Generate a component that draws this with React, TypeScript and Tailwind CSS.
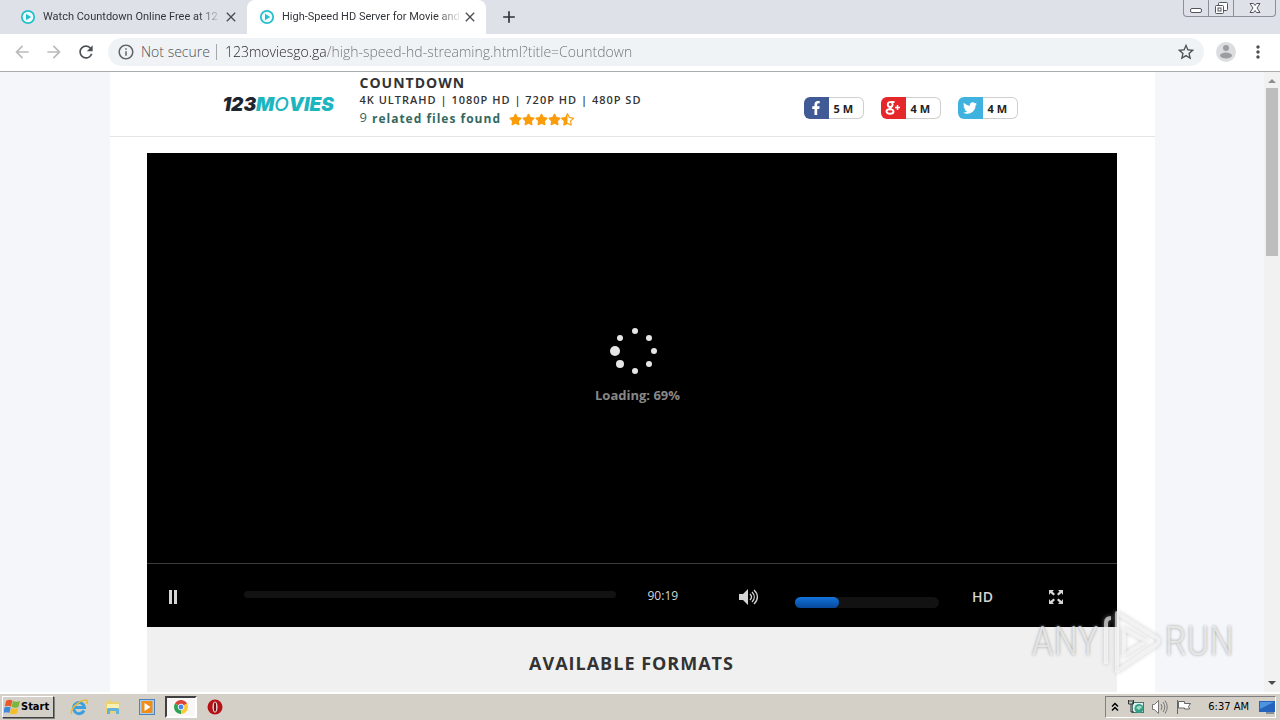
import { ReactNode } from 'react';
import { FaFacebookF, FaStar, FaStarHalfAlt, FaTwitter } from 'react-icons/fa';
import { MdArrowBack, MdArrowForward, MdClose, MdInfoOutline, MdMoreVert, MdRefresh, MdStarBorder, MdAdd } from 'react-icons/md';

const tabs = [
  { title: 'Watch Countdown Online Free at 12', active: false },
  { title: 'High-Speed HD Server for Movie and', active: true },
];

function PlayFavicon() {
  return (
    <svg className="size-4 shrink-0" viewBox="0 0 16 16">
      <circle cx="8" cy="8" r="6.2" fill="#effcfd" stroke="#27bfcb" strokeWidth="1.8" />
      <path d="M6 4.8v6.4L11.2 8z" fill="#27bfcb" />
    </svg>
  );
}

function TabStrip() {
  return (
    <div className="flex h-[34px] items-stretch bg-[#dee1e8]">
      <div role="tablist" className="flex pl-2">
        {tabs.map((tab) => (
          <div
            key={tab.title}
            className={`flex w-[239px] items-center rounded-t-lg pl-3 pr-2 ${tab.active ? 'bg-white' : ''}`}
          >
            <PlayFavicon />
            <button
              role="tab"
              aria-selected={tab.active}
              className="ml-[7px] flex-1 whitespace-nowrap text-left font-['Roboto',sans-serif] text-[11px] text-[#33363a] [mask-image:linear-gradient(90deg,#000_86%,transparent)]"
            >
              {tab.title}
            </button>
            <button aria-label="Close tab">
              <MdClose className="size-4 text-[#4a4d51]" />
            </button>
          </div>
        ))}
      </div>
      <button aria-label="New tab" className="ml-[13px]">
        <MdAdd className="size-5 text-[#2f3338]" />
      </button>
      <div className="ml-auto mr-1 flex h-[17px] rounded-b border border-t-0 border-[#8b8f99] text-[#50545e]">
        <button aria-label="Minimize" className="flex w-[25px] items-center justify-center border-r border-[#8b8f99]">
          <svg className="size-4" viewBox="0 0 16 16" fill="#fff" stroke="currentColor">
            <rect x="2.5" y="8.5" width="11" height="4" rx="1.5" />
          </svg>
        </button>
        <button aria-label="Restore" className="flex w-[25px] items-center justify-center border-r border-[#8b8f99]">
          <svg className="size-4" viewBox="0 0 16 16" fill="#fff" stroke="currentColor">
            <rect x="5.5" y="2.5" width="9" height="8" rx="1" />
            <rect x="2.5" y="5.5" width="8" height="8" rx="1" />
            <rect x="5" y="8" width="3" height="3" />
          </svg>
        </button>
        <button aria-label="Close window" className="flex w-[41px] items-center justify-center">
          <svg className="size-4" viewBox="0 0 16 16" fill="#fff" stroke="currentColor">
            <path d="M3 3.5h3.5L8 5.5l1.5-2H13L10 8l3 4.5H9.5L8 10.5l-1.5 2H3L6 8z" />
          </svg>
        </button>
      </div>
    </div>
  );
}

function AddressBar() {
  return (
    <div className="flex h-[38px] items-center border-b border-[#aaadad] bg-white pb-[2px] pl-3 pr-3">
      <button aria-label="Back" className="mr-3">
        <MdArrowBack className="size-5 text-[#b9bbbd]" />
      </button>
      <button aria-label="Forward" className="mr-3">
        <MdArrowForward className="size-5 text-[#b9bbbd]" />
      </button>
      <button aria-label="Reload" className="mr-3">
        <MdRefresh className="size-5 text-[#4d5155]" />
      </button>
      <div className="flex h-7 flex-1 items-center rounded-full bg-[#f0f3f6] pl-[9px] pr-2 font-['Open_Sans','Noto_Sans',sans-serif] text-[14px]">
        <MdInfoOutline className="mr-[6px] size-[18px] text-[#5f6368]" />
        <span className="mr-[6px] whitespace-nowrap font-light text-[#4d5155]">Not secure</span>
        <span className="mr-2 h-4 w-px bg-[#a4a7ab]" />
        <input
          aria-label="Address"
          defaultValue="123moviesgo.ga/high-speed-hd-streaming.html?title=Countdown"
          className="min-w-0 flex-1 bg-[linear-gradient(90deg,#202124_102px,#6c7075_102px)] bg-clip-text font-light text-transparent outline-none"
        />
        <button aria-label="Bookmark this page">
          <MdStarBorder className="size-5 text-[#4d5155]" />
        </button>
      </div>
      <button aria-label="Profile" className="ml-3">
        <svg className="size-5" viewBox="0 0 20 20">
          <circle cx="10" cy="10" r="10" fill="#dcdddf" />
          <circle cx="10" cy="6" r="3" fill="#9b9da0" />
          <ellipse cx="10" cy="13.5" rx="6" ry="3" fill="#9b9da0" />
        </svg>
      </button>
      <button aria-label="Menu" className="ml-3">
        <MdMoreVert className="size-5 text-[#4d5155]" />
      </button>
    </div>
  );
}

function ShareButton({ label, count, color, children }: {
  label: string;
  count: string;
  color: string;
  children: ReactNode;
}) {
  return (
    <a href="#" aria-label={`${label} ${count}`} className="flex h-[22px] w-[60px]">
      <span className={`flex w-[25px] items-center justify-center rounded-l-md text-white ${color}`}>{children}</span>
      <span className="flex-1 rounded-r-md border border-l-0 border-[#cfcfcf] bg-white pl-[5px] text-[11px] leading-[22px] font-bold text-[#222]">
        {count}
      </span>
    </a>
  );
}

function SiteHeader() {
  return (
    <header className="flex h-[65px] items-start border-b border-[#e3e4e6] pl-[113px] pr-[137px]">
      <a href="#" className="mt-[21px] w-[137px] font-['Inter','Open_Sans',sans-serif] text-[19px] leading-6 font-black italic text-[#1d2530]">
        123<span className="text-[#1cb5c0]">M</span>
        <span className="font-medium text-[#1cb5c0]">O</span>
        <span className="text-[#1cb5c0]">VIES</span>
      </a>
      <div className="text-[#333]">
        <h1 className="mt-[2px] text-[14px] leading-[18px] font-bold tracking-[1px]">COUNTDOWN</h1>
        <p className="text-[11px] leading-4 font-semibold tracking-[1px]">4K ULTRAHD | 1080P HD | 720P HD | 480P SD</p>
        <p className="flex items-center text-[12px] leading-[22px] font-bold tracking-[1px] text-[#33695f]">
          <span className="mr-1 -mt-1 text-[13px] font-normal">9</span>
          related files found
          <span className="ml-2 flex text-[13px] text-[#fb9d0a]">
            <FaStar /><FaStar /><FaStar /><FaStar /><FaStarHalfAlt />
          </span>
        </p>
      </div>
      <div className="mt-[25px] ml-auto flex gap-[17px]">
        <ShareButton label="Facebook" count="5 M" color="bg-[#405a96]">
          <FaFacebookF className="size-[14px]" />
        </ShareButton>
        <ShareButton label="Google Plus" count="4 M" color="bg-[#e5262b]">
          <svg className="size-4" viewBox="0 0 16 16" fill="none" stroke="currentColor" strokeWidth="1.9">
            <circle cx="5.2" cy="4.5" r="2.4" />
            <path d="M5.500 2h4M6.500 6.800c-2.500 1-1.500 1.800 0 2.500" />
            <ellipse cx="5" cy="11.500" rx="3.500" ry="2.300" />
            <path d="M12.500 5v5M10 7.500h5" strokeWidth="1.500" />
          </svg>
        </ShareButton>
        <ShareButton label="Twitter" count="4 M" color="bg-[#40b2e0]">
          <FaTwitter className="size-[14px]" />
        </ShareButton>
      </div>
    </header>
  );
}

function Player() {
  return (
    <section className="bg-black text-[#d5d5d5]">
      <div className="flex h-[410px] flex-col items-center pt-[173px] pl-1">
        <svg className="h-[50px] w-[50px]" viewBox="0 0 50 50" fill="#e6e6e6">
          <circle cx="26" cy="5" r="3" />
          <circle cx="40" cy="12" r="3" />
          <circle cx="45" cy="25" r="3" />
          <circle cx="40" cy="38" r="3" />
          <circle cx="26" cy="45" r="3" />
          <circle cx="11" cy="38" r="4" />
          <circle cx="6" cy="25" r="5" />
          <circle cx="11" cy="12" r="3" />
        </svg>
        <p className="mt-[7px] pl-2 text-[13px] leading-6 font-bold text-[#888]">Loading: 69%</p>
      </div>
      <div className="flex h-16 items-center border-t border-[#3c3c3c] pt-[2px] pr-[53px] pl-[21px]">
        <button aria-label="Pause" className="mr-[66px]">
          <svg className="h-[14px] w-[10px]" viewBox="0 0 10 14" fill="currentColor">
            <path d="M1 0h3v14H1zM6 0h3v14H6z" />
          </svg>
        </button>
        <input
          type="range"
          aria-label="Seek"
          defaultValue={0}
          className="mb-1 h-[7px] min-w-0 flex-1 appearance-none rounded bg-[#121212] [&::-webkit-slider-thumb]:w-0 [&::-webkit-slider-thumb]:appearance-none"
        />
        <span className="mr-[30px] mb-[2px] ml-8 w-8 text-[12px]">90:19</span>
        <button aria-label="Mute" className="ml-[29px]">
          <svg className="h-4 w-5" viewBox="0 0 20 16">
            <path d="M0 5h4l5-5v16l-5-5H0z" fill="currentColor" />
            <path d="M11 5c2 2 2 4 0 6M13 3c3 3 3 7 0 10M15 1c4.500 4 4.500 10 0 14" fill="none" stroke="currentColor" strokeWidth="1.300" />
          </svg>
        </button>
        <div className="relative mt-3 ml-9 h-[11px] w-36 rounded-full bg-[#121212]">
          <div className="h-full w-[44px] rounded-md bg-linear-to-b from-[#1474db] to-[#07489b]" />
          <input type="range" aria-label="Volume" defaultValue={30} className="absolute inset-0 w-full opacity-0" />
        </div>
        <button className="ml-8 w-6 text-[14px] font-semibold">HD</button>
        <button aria-label="Full screen" className="ml-[53px]">
          <svg className="size-4" viewBox="0 0 16 16" fill="currentColor">
            <path d="M1 1h5L4.500 2.500l2.500 2.500L5.500 6.500 2.500 4 1 6zM15 1h-5l1.500 1.500L9 5l1.500 1.500 3-2.500L15 6zM1 15h5l-1.500-1.500L7 11 5.500 9.500 2.500 12 1 10zM15 15h-5l1.500-1.500L9 11l1.500-1.500 3 2.500L15 10z" />
          </svg>
        </button>
      </div>
    </section>
  );
}

function ScrollBar() {
  return (
    <div className="flex w-4 flex-col items-center justify-between bg-[#f1f1f1]">
      <div className="flex w-full flex-col items-center">
        <svg className="size-4" viewBox="0 0 16 16"><path d="M4 11h8L8 7z" fill="#8d8d8d" /></svg>
        <div className="h-[168px] w-3 bg-[#bdbdbd]" />
      </div>
      <svg className="size-4" viewBox="0 0 16 16"><path d="M4 5h8L8 9z" fill="#4b4b4b" /></svg>
    </div>
  );
}

function Watermark() {
  return (
    <div className="pointer-events-none absolute right-[46px] bottom-[16px] flex items-center font-['Roboto_Condensed','Liberation_Sans_Narrow','Liberation_Sans',sans-serif] text-[40px] leading-[68px] font-light text-white/60 [text-shadow:0_0_3px_#9a9a9a]">
      <span>ANY</span>
      <svg className="mx-1 h-[66px] w-[58px] drop-shadow-[0_0_2px_#aaa]" viewBox="0 0 58 66" fill="none" stroke="#fff" strokeOpacity="0.6" strokeWidth="4" strokeLinejoin="round">
        <path d="M3 55V14q0-5 5-5" />
        <path d="M14 4l40 25q3 3 0 6L14 62z" />
        <path d="M21 20v26l22-14z" />
      </svg>
      <span>RUN</span>
    </div>
  );
}

function WindowsFlag() {
  return (
    <svg className="size-4" viewBox="0 0 16 16">
      <path d="M2 2q3-2 6.500-.5L7 7.500Q4 6 .8 7.500z" fill="#e8592b" />
      <path d="M9 2q3 1.500 7 0L14.500 8q-3 1.500-7 0z" fill="#7cb53c" />
      <path d="M.5 8.500q3-1.500 6.200 0L5.300 14q-3-1.500-6 0z" fill="#3c8ad8" />
      <path d="M7.300 9q3 1.500 7 0L12.800 14.500q-3 1.500-7 0z" fill="#f5bd27" />
    </svg>
  );
}

function Taskbar() {
  return (
    <footer className="flex h-7 shrink-0 items-center border-t-2 border-white bg-[#d4d0c8] pl-[2px] pr-1 font-['DejaVu_Sans_Condensed','DejaVu_Sans',sans-serif] text-[11px] text-black">
      <button className="flex h-[22px] w-[52px] items-center gap-px border border-t-white border-l-white border-r-[#404040] border-b-[#404040] pl-px font-bold shadow-[1px_1px_0_#808080]">
        <WindowsFlag />
        Start
      </button>
      <div className="ml-[9px] flex items-center gap-[2px]">
        <button aria-label="Internet Explorer" className="flex h-[22px] w-8 items-center justify-center">
          <svg className="size-[18px]" viewBox="0 0 18 18" fill="none">
            <path d="M14 12.500A5.500 5.500 0 1 1 14.500 9.500H4.500" stroke="#3c9fe0" strokeWidth="3" />
            <path d="M2 16C-1 13 8 2 16 2c2 0 1 3 .5 4" stroke="#e8bb35" strokeWidth="1.500" />
          </svg>
        </button>
        <button aria-label="File Explorer" className="flex h-[22px] w-8 items-center justify-center">
          <svg className="size-4" viewBox="0 0 16 16">
            <path d="M1 3l5-2 2 2h7v11H1z" fill="#ecd16f" />
            <path d="M2 5h12v4H2z" fill="#fbf0b4" />
            <path d="M2 15v-4q0-2 2-2h8q2 0 2 2v4h-3v-3H5v3z" fill="#62b2dc" />
          </svg>
        </button>
        <button aria-label="Media Player" className="flex h-[22px] w-8 items-center justify-center">
          <svg className="size-4" viewBox="0 0 16 16">
            <rect x=".5" y=".5" width="15" height="15" fill="#a9cfee" stroke="#4a83bd" />
            <rect x="2.500" y="2" width="11" height="12" fill="#f18b19" />
            <path d="M5.500 4v8L11.500 8z" fill="#fff" />
          </svg>
        </button>
        <button aria-label="Chrome" className="flex h-[22px] w-8 items-center justify-center border-2 border-t-[#404040] border-l-[#404040] border-r-white border-b-white bg-[#f8f7f6]">
          <svg className="size-[14px]" viewBox="0 0 16 16">
            <path d="M8 8L1.100 4A8 8 0 0 1 14.900 4z" fill="#dc4437" />
            <path d="M8 8l6.900-4A8 8 0 0 1 8 16z" fill="#fdcb38" />
            <path d="M8 8v8A8 8 0 0 1 1.100 4z" fill="#2ca352" />
            <circle cx="8" cy="8" r="3.300" fill="#4385ef" stroke="#fff" />
          </svg>
        </button>
        <button aria-label="Opera" className="flex h-[22px] w-8 items-center justify-center">
          <svg className="size-4" viewBox="0 0 16 16">
            <circle cx="8" cy="8" r="7.500" fill="#b51218" />
            <ellipse cx="8" cy="8" rx="2.500" ry="5.500" fill="#f2e9e9" />
            <ellipse cx="8" cy="8" rx="1.200" ry="4.800" fill="#7a1013" />
          </svg>
        </button>
      </div>
      <div className="ml-auto flex h-[22px] items-center border border-t-[#808080] border-l-[#808080] border-r-white border-b-white pl-1">
        <button aria-label="Show hidden icons">
          <svg className="size-[10px]" viewBox="0 0 10 10" fill="none" stroke="#000" strokeWidth="1.500">
            <path d="M2 4.500L5 1.500l3 3M2 8.500l3-3 3 3" />
          </svg>
        </button>
        <button aria-label="Network" className="ml-2">
          <svg className="size-4" viewBox="0 0 16 16">
            <rect x="4.500" y="3.500" width="11" height="10" fill="#dff0ee" stroke="#49756f" />
            <circle cx="11" cy="9.500" r="4.500" fill="#36a087" />
            <path d="M8 9q3-4 6-1l-3 3z" fill="#a2dac3" />
            <path d="M.5 1v4h5V1M2 1v2M4 1v2M3 5v8h3" fill="none" stroke="#333" />
          </svg>
        </button>
        <button aria-label="Volume mixer" className="ml-2">
          <svg className="size-4" viewBox="0 0 16 16" fill="#fff" stroke="#777">
            <path d="M.5 5.500h2l4-4v13l-4-4h-2z" />
            <path d="M9 5q2 3 0 6M11 3q3.500 5 0 10M13 1.500q4.500 6.500 0 13" fill="none" />
          </svg>
        </button>
        <button aria-label="Action Center" className="ml-2">
          <svg className="size-4" viewBox="0 0 16 16" fill="#fff" stroke="#666">
            <path d="M1.500 1v14M2.500 2.500h6v2h6l-2 3 1 2.500h-5V9h-6z" />
          </svg>
        </button>
        <span className="ml-4 whitespace-nowrap">6:37 AM</span>
        <button aria-label="Show desktop" className="ml-[10px]">
          <svg className="size-4" viewBox="0 0 16 16">
            <rect y="2" width="16" height="11" fill="#2464bd" />
            <path d="M1 3h14L1 10z" fill="#4d94e0" />
            <path d="M7 14h8" stroke="#31506d" />
          </svg>
        </button>
      </div>
    </footer>
  );
}

export default function App() {
  return (
    <div className="flex h-screen flex-col overflow-hidden bg-white">
      <TabStrip />
      <AddressBar />
      <div className="relative flex min-h-0 flex-1 bg-[#f4f6fa] font-['Open_Sans','Noto_Sans',sans-serif]">
        <div className="min-w-0 flex-1 overflow-hidden">
          <div className="mx-auto min-h-full max-w-[1045px] bg-white">
            <SiteHeader />
            <main className="mt-4 mr-[38px] ml-[37px]">
              <Player />
              <section className="bg-[#f0f0f0] pt-6 pb-10 text-center">
                <h2 className="text-[18px] leading-6 font-bold tracking-[1px] text-[#333]">AVAILABLE FORMATS</h2>
              </section>
            </main>
          </div>
        </div>
        <ScrollBar />
        <Watermark />
      </div>
      <Taskbar />
    </div>
  );
}
